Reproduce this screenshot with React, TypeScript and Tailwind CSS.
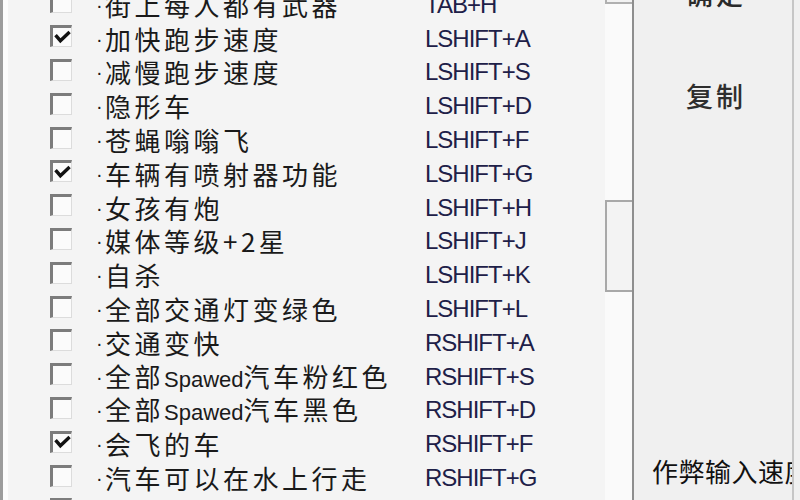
type Cheat = { name: string; key: string; on?: boolean };

const cheats: Cheat[] = [
  { name: "街上每人都有武器", key: "TAB+H" },
  { name: "加快跑步速度", key: "LSHIFT+A", on: true },
  { name: "减慢跑步速度", key: "LSHIFT+S" },
  { name: "隐形车", key: "LSHIFT+D" },
  { name: "苍蝇嗡嗡飞", key: "LSHIFT+F" },
  { name: "车辆有喷射器功能", key: "LSHIFT+G", on: true },
  { name: "女孩有炮", key: "LSHIFT+H" },
  { name: "媒体等级+2星", key: "LSHIFT+J" },
  { name: "自杀", key: "LSHIFT+K" },
  { name: "全部交通灯变绿色", key: "LSHIFT+L" },
  { name: "交通变快", key: "RSHIFT+A" },
  { name: "全部Spawed汽车粉红色", key: "RSHIFT+S" },
  { name: "全部Spawed汽车黑色", key: "RSHIFT+D" },
  { name: "会飞的车", key: "RSHIFT+F", on: true },
  { name: "汽车可以在水上行走", key: "RSHIFT+G" },
  { name: "车辆无敌", key: "RSHIFT+H" },
];

const cjk = { fontFamily: '"Noto Sans CJK SC", "Liberation Sans", sans-serif' };
const latin = { fontFamily: '"Liberation Sans", Arial, sans-serif' };

// split latin runs out so they don't get the wide CJK tracking
function Name({ text }: { text: string }) {
  const parts = text.split(/([A-Za-z]+)/).filter(Boolean);
  return (
    <>
      {parts.map((p, i) =>
        /^[A-Za-z]+$/.test(p) ? (
          <span key={i} className="text-[22px] tracking-normal" style={latin}>
            {p}
          </span>
        ) : (
          <span key={i}>{p}</span>
        )
      )}
    </>
  );
}

function Check({ on }: { on?: boolean }) {
  return (
    <div className="w-[22px] h-[22px] -mt-[5px] bg-[#fbfbfb] border-t-[3px] border-l-[3px] border-r border-b border-t-[#7c7c7c] border-l-[#7c7c7c] border-r-[#dcdcdc] border-b-[#dcdcdc] flex items-center justify-center">
      {on ? (
        <svg width="17" height="15" viewBox="0 0 16 14">
          <path d="M2.5 6 L6 10 L13.5 3" fill="none" stroke="#111" strokeWidth="3.2" strokeLinecap="square" />
        </svg>
      ) : null}
    </div>
  );
}

export default function App() {
  return (
    <div className="w-[800px] h-[500px] overflow-hidden flex bg-[#f0f0f0] text-[#1a1a1a]">
      <div className="w-[3px] bg-[#9c9c9c]" />
      <div className="w-[5px] bg-[#fcfcfc]" />

      <div className="w-[597px] bg-[#f4f4f4] overflow-hidden">
        <div className="-mt-[12px]">
          {cheats.map((c, i) => (
            <div key={i} className="h-[33.8px] flex items-center">
              <div className="w-[42px]" />
              <Check on={c.on} />
              <div className="w-[24px]" />
              <span className="w-[9px] text-[20px] leading-none" style={latin}>·</span>
              <div className="w-[320px] text-[26px] leading-none tracking-[3.5px] whitespace-nowrap" style={cjk}>
                <Name text={c.name} />
              </div>
              <div className="text-[24px] leading-none tracking-[-1px] text-[#1e2048]" style={latin}>
                {c.key}
              </div>
            </div>
          ))}
        </div>
      </div>

      <div className="w-[27px] flex flex-col bg-[#f8f8f8]">
        <div className="h-[4px] border-b-2 border-l-2 border-[#b0b0b0] bg-[#f2f2f2]" />
        <div className="h-[196px] bg-[#fafafa]" />
        <div className="h-[92px] border-t-2 border-b-2 border-l-2 border-[#a8a8a8] bg-[#f3f3f3]" />
        <div className="flex-1 bg-[#fafafa]" />
      </div>
      <div className="w-[2px] bg-[#8e8e8e]" />

      <div className="w-[158px] flex flex-col items-center pl-[6px]" style={cjk}>
        <div className="-mt-[20px] text-[27px] leading-none tracking-[3px] font-medium text-[#2a2a2a]">确定</div>
        <div className="mt-[75px] text-[27px] leading-none tracking-[3px] font-medium text-[#2e2e2e]">复制</div>
        <div className="mt-auto mb-[16px] self-start pl-[12px] text-[26px] leading-none tracking-[0.5px] whitespace-nowrap text-[#111]">
          作弊输入速度
        </div>
      </div>
      <div className="w-[2px] bg-[#c6c6c6]" />
      <div className="flex-1 bg-[#f0f0f0]" />
    </div>
  );
}
